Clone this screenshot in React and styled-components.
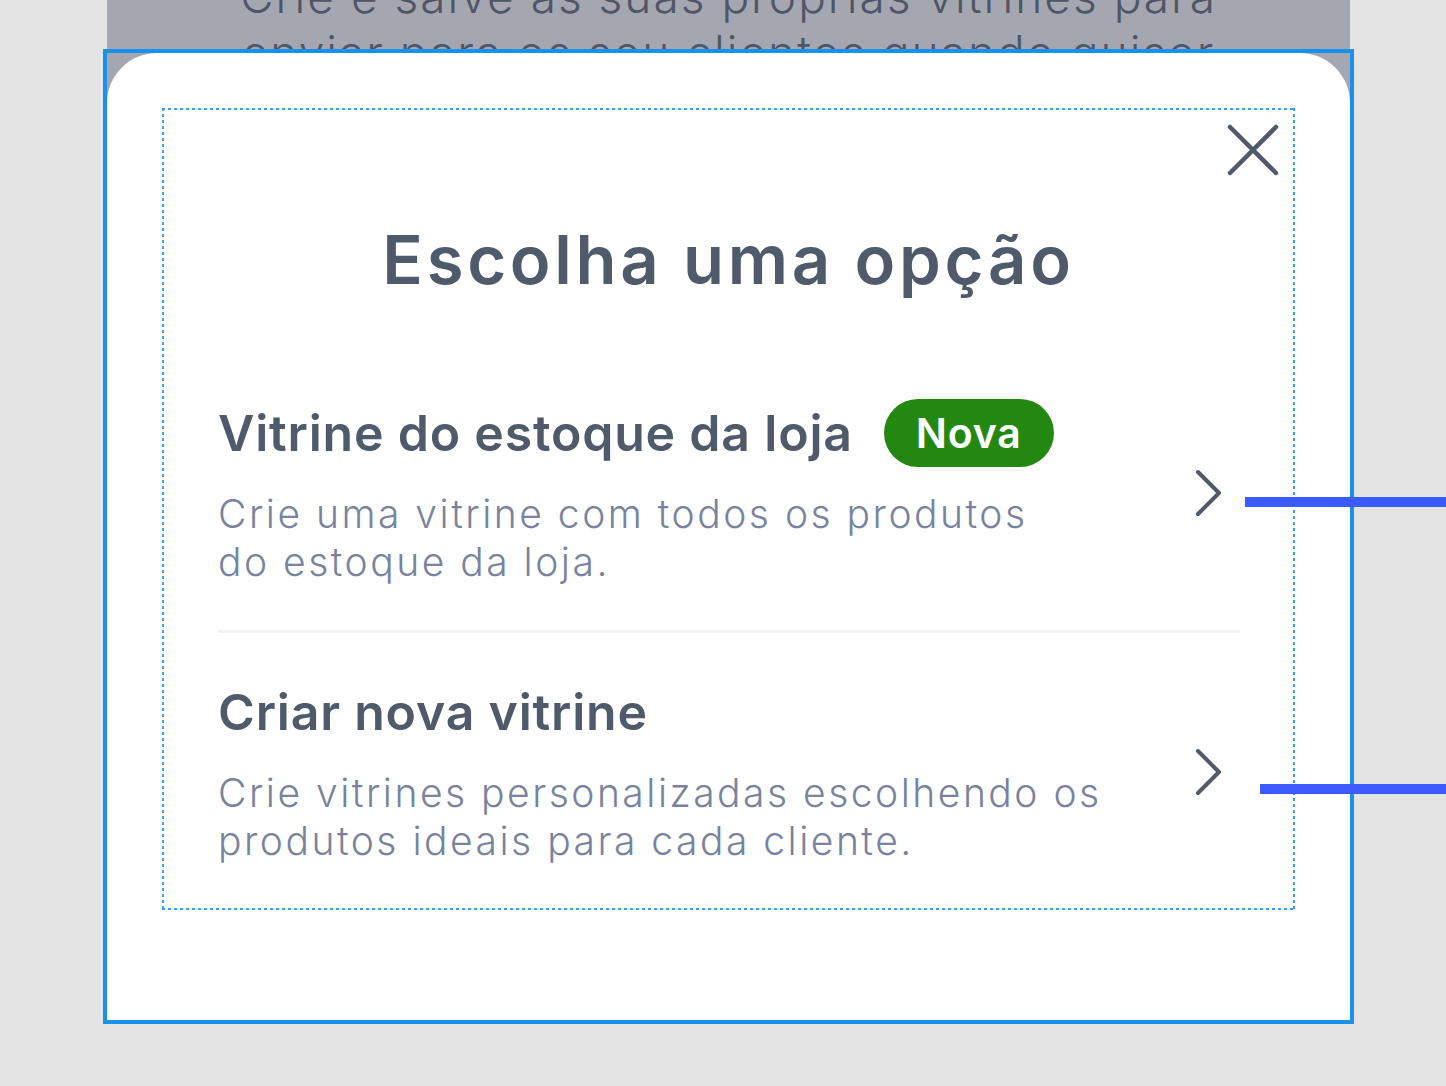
import React from "react";
import styled, { createGlobalStyle } from "styled-components";

// opções do modal
const OPTIONS = [
  {
    id: "estoque",
    title: "Vitrine do estoque da loja",
    badge: "Nova",
    lines: ["Crie uma vitrine com todos os produtos", "do estoque da loja."],
  },
  {
    id: "nova",
    title: "Criar nova vitrine",
    lines: ["Crie vitrines personalizadas escolhendo os", "produtos ideais para cada cliente."],
  },
];

const CloseIcon = () => (
  <svg width="52" height="52" viewBox="0 0 52 52" fill="none">
    <path d="M3 3L49 49M49 3L3 49" stroke="#4f5a6b" strokeWidth="4.5" strokeLinecap="round" />
  </svg>
);

const ChevronIcon = () => (
  <svg width="27" height="48" viewBox="0 0 27 48" fill="none">
    <path d="M3 3L24 24L3 45" stroke="#4f5a6b" strokeWidth="4" strokeLinecap="round" strokeLinejoin="round" />
  </svg>
);

const App = () => {
  return (
    <Page>
      <GlobalStyle />
      <Screen>
        <ScreenText>
          Crie e salve as suas próprias vitrines para
          <br />
          enviar para os seu clientes quando quiser
        </ScreenText>
      </Screen>

      <Frame>
        <Modal>
          <Content>
            <CloseRow>
              <CloseButton aria-label="Fechar">
                <CloseIcon />
              </CloseButton>
            </CloseRow>
            <Title>Escolha uma opção</Title>
            <List>
              {OPTIONS.map((item) => (
                <Option key={item.id}>
                  <OptionText>
                    <OptionHead>
                      <OptionTitle>{item.title}</OptionTitle>
                      {item.badge && <Badge>{item.badge}</Badge>}
                    </OptionHead>
                    <Description>
                      {item.lines.map((line) => (
                        <span key={line}>{line}</span>
                      ))}
                    </Description>
                  </OptionText>
                  <Chevron>
                    <ChevronIcon />
                  </Chevron>
                </Option>
              ))}
            </List>
          </Content>
        </Modal>
      </Frame>

      <Marker $left={1245} $top={497} />
      <Marker $left={1260} $top={784} />
    </Page>
  );
};

export default App;

const DOT = "#3a9ff3";

const GlobalStyle = createGlobalStyle`
  * { box-sizing: border-box; }
  html, body {
    margin: 0;
    padding: 0;
    background: #e4e4e4;
  }
  body {
    font-family: Inter, "Noto Sans", sans-serif;
  }
`;

const Page = styled.div`
  position: relative;
  width: 1446px;
  height: 1086px;
  overflow: hidden;
`;

const Screen = styled.div`
  margin-left: 107px;
  width: 1243px;
  height: 1020px;
  background: #a4a7b0;
  overflow: hidden;
`;

const ScreenText = styled.p`
  margin: -32px 0 0;
  text-align: center;
  font-size: 46px;
  font-weight: 300;
  line-height: 56px;
  letter-spacing: 2px;
  color: #4f5666;
`;

// moldura azul de seleção por cima da tela
const Frame = styled.div`
  position: absolute;
  top: 49px;
  left: 103px;
  width: 1251px;
  height: 975px;
  border: 4px solid #1890ee;
`;

const Modal = styled.div`
  height: 100%;
  background: #fff;
  border-radius: 50px 50px 0 0;
  padding: 55px;
`;

// caixa pontilhada (guia do layout)
const Content = styled.div`
  height: 802px;
  display: flex;
  flex-direction: column;
  background:
    repeating-linear-gradient(90deg, ${DOT} 0 3px, transparent 3px 6px) top left / 100% 2px no-repeat,
    repeating-linear-gradient(90deg, ${DOT} 0 3px, transparent 3px 6px) bottom left / 100% 2px no-repeat,
    repeating-linear-gradient(180deg, ${DOT} 0 3px, transparent 3px 6px) top left / 2px 100% no-repeat,
    repeating-linear-gradient(180deg, ${DOT} 0 3px, transparent 3px 6px) top right / 2px 100% no-repeat;
`;

const CloseRow = styled.div`
  display: flex;
  justify-content: flex-end;
  padding: 16px 16px 0 0;
`;

const CloseButton = styled.button`
  border: 0;
  padding: 0;
  background: none;
  display: flex;
  cursor: pointer;
`;

const Title = styled.h1`
  margin: 44px 0 0;
  text-align: center;
  font-size: 67px;
  line-height: 80px;
  font-weight: 600;
  letter-spacing: 3.7px;
  color: #4f5a6b;
`;

const List = styled.div`
  margin-top: 54px;
  padding: 0 55px 0 56px;
  display: flex;
  flex-direction: column;
`;

const Option = styled.div`
  display: flex;
  align-items: center;
  padding: 45px 18px 44px 0;
  cursor: pointer;

  & + & {
    border-top: 3px solid #f2f2f4;
  }
`;

const OptionText = styled.div`
  flex: 1;
  display: flex;
  flex-direction: column;
`;

const OptionHead = styled.div`
  display: flex;
  align-items: center;
  gap: 31px;
  min-height: 68px;
`;

const OptionTitle = styled.h2`
  margin: 0;
  font-size: 50px;
  line-height: 60px;
  font-weight: 600;
  letter-spacing: 0.8px;
  color: #4f5a6b;
`;

const Badge = styled.span`
  display: inline-flex;
  align-items: center;
  height: 68px;
  padding: 0 32px;
  border-radius: 34px;
  background: #228811;
  color: #fff;
  font-size: 41px;
  font-weight: 600;
  letter-spacing: 0.8px;
`;

const Description = styled.p`
  margin: 23px 0 0;
  display: flex;
  flex-direction: column;
  font-size: 39px;
  line-height: 48px;
  font-weight: 300;
  letter-spacing: 2.5px;
  color: #7883a0;
  white-space: nowrap;
`;

const Chevron = styled.div`
  display: flex;
  flex-shrink: 0;
`;

const Marker = styled.div`
  position: absolute;
  left: ${(p) => p.$left}px;
  top: ${(p) => p.$top}px;
  right: 0;
  height: 10px;
  background: #3c5bff;
`;
